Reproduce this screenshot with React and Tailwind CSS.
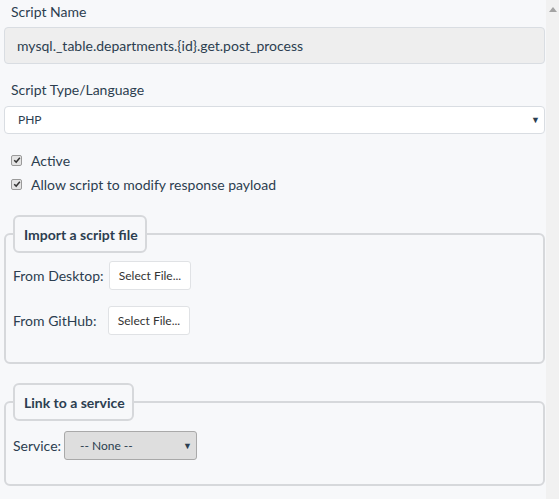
import React from 'react';

const Check = ({ label }) => (
  <label className="flex items-center h-6 pl-[11px]">
    <span className="w-[11px] h-[11px] rounded-[2px] border border-[#9a9a9a] bg-[#e4e4e4] flex items-center justify-center">
      <svg viewBox="0 0 10 10" className="w-[8px] h-[8px]">
        <path d="M1.5 5.2 L4 7.6 L8.6 2.2" fill="none" stroke="#333" strokeWidth="1.8" />
      </svg>
    </span>
    <span className="ml-[9px]">{label}</span>
  </label>
);

const Legend = ({ children }) => (
  <legend className="pl-[9px] pr-[7px] h-[38px] flex items-center font-bold border-2 border-[#d6d8db] rounded-md bg-[#f7f8fa]">
    {children}
  </legend>
);

const FileButton = () => (
  <button
    type="button"
    className="h-[29px] w-[82px] bg-white border border-[#e0e2e5] rounded-[3px] text-[12px] text-[#333]"
  >
    Select File...
  </button>
);

export default function App() {
  return (
    <div className="flex w-[559px] h-[499px] bg-[#f7f8fa] text-[14px] text-[#2c3e50] font-['Lato','Liberation_Sans',sans-serif] overflow-hidden">
      <div className="w-[546px] pt-[2px]">
        <div className="pl-[11px] leading-5">Script Name</div>
        <div className="ml-[4px] mr-[1px] mt-[5px] h-[37px] bg-[#eeeeee] border border-[#d9dde2] rounded-[4px] flex items-center pl-[12px]">
          mysql._table.departments.{'{id}'}.get.post_process
        </div>

        <div className="pl-[11px] leading-5 mt-[16px]">Script Type/Language</div>
        <div className="ml-[4px] mr-[1px] mt-[6px] h-[28px] bg-white border border-[#d9dde2] rounded-[4px] flex items-center justify-between pl-[13px] pr-[4px] text-[12px]">
          <span>PHP</span>
          <span className="text-[9px] text-[#2c3e50]">▼</span>
        </div>

        <div className="mt-[14px]">
          <Check label="Active" />
          <Check label="Allow script to modify response payload" />
        </div>

        <fieldset className="ml-[4px] mr-[1px] mt-[19px] border-2 border-[#d6d8db] rounded-md pl-[7px] pb-[27px] min-w-0">
          <Legend>Import a script file</Legend>
          <div className="flex items-center mt-[8px] h-[29px]">
            <span className="w-[96px]">From Desktop:</span>
            <FileButton />
          </div>
          <div className="flex items-center mt-[16px] h-[29px]">
            <span className="w-[95px]">From GitHub:</span>
            <FileButton />
          </div>
        </fieldset>

        <fieldset className="ml-[4px] mr-[1px] mt-[19px] border-2 border-[#d6d8db] rounded-md pl-[7px] pb-[24px] min-w-0">
          <Legend>Link to a service</Legend>
          <div className="flex items-center mt-[10px] h-[29px]">
            <span className="w-[51px]">Service:</span>
            <div className="h-[29px] w-[133px] bg-[#dedede] border border-[#a9a9a9] rounded-[3px] flex items-center justify-between pl-[15px] pr-[4px] text-[12px]">
              <span>-- None --</span>
              <span className="text-[9px]">▼</span>
            </div>
          </div>
        </fieldset>
      </div>
      <div className="w-[13px] h-full bg-[#f1f1f1] flex justify-center pt-[7px]">
        <svg viewBox="0 0 8 5" className="w-[8px] h-[5px]">
          <path d="M0 5 L4 0 L8 5 Z" fill="#a3a3a3" />
        </svg>
      </div>
    </div>
  );
}
